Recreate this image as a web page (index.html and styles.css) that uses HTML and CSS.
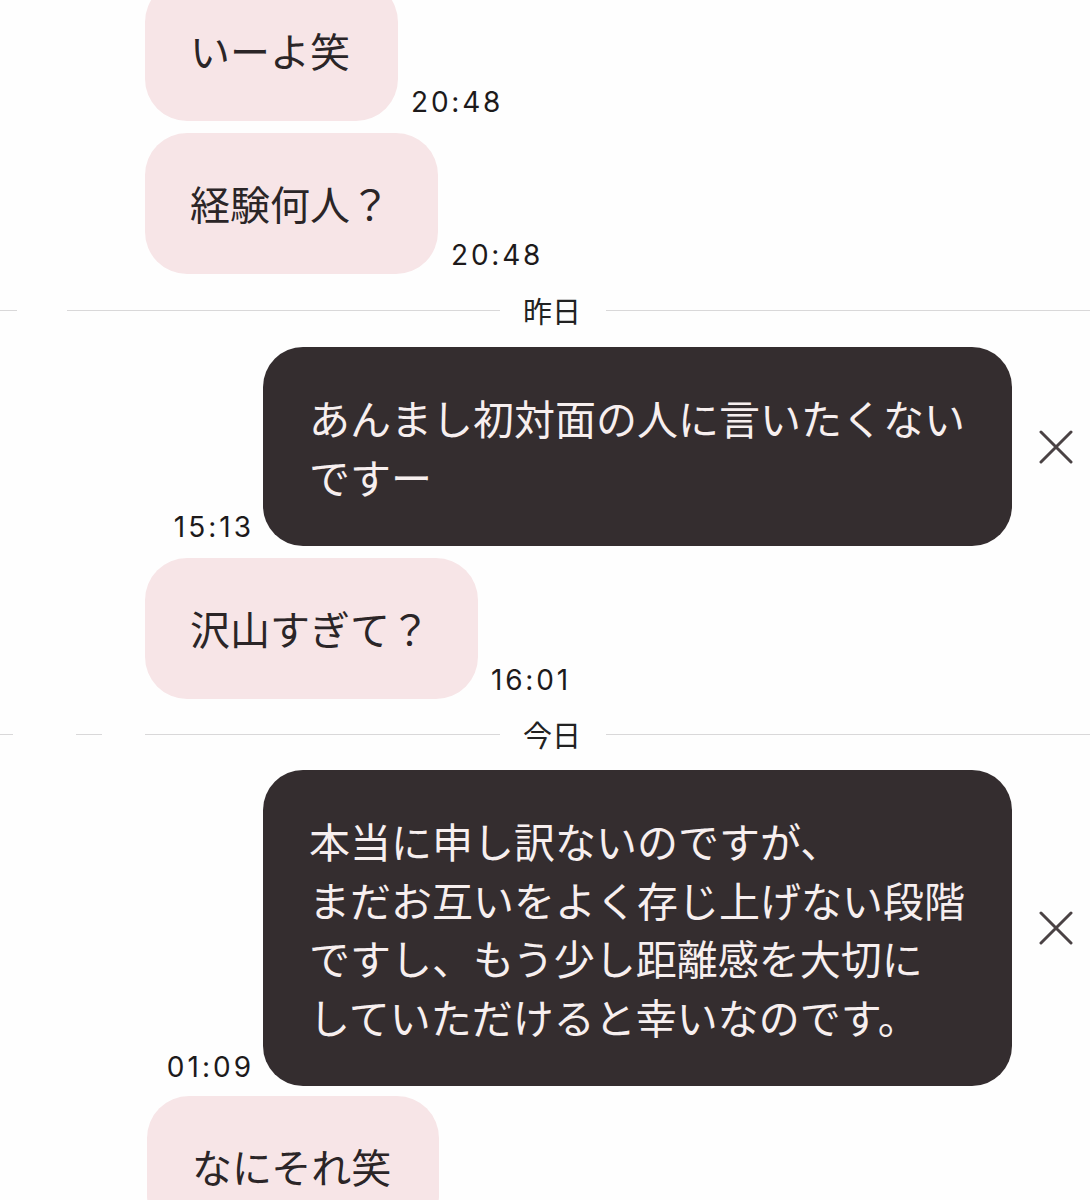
FILE: index.html
```html
<!DOCTYPE html>
<html lang="ja">
<head>
<meta charset="utf-8">
<title>chat</title>
<link rel="stylesheet" href="styles.css">
</head>
<body>
<main class="chat">
  <div class="row in">
    <div class="bubble pink">いーよ笑</div>
    <span class="time">20:48</span>
  </div>
  <div class="row in">
    <div class="bubble pink">経験何人？</div>
    <span class="time">20:48</span>
  </div>

  <div class="divider">
    <span class="seg d1a"></span>
    <span class="seg d1b"></span>
    <span class="label">昨日</span>
    <span class="seg rest"></span>
  </div>

  <div class="row out">
    <span class="time dark-time">15:13</span>
    <div class="bubble dark">あんまし初対面の人に言いたくないですー</div>
    <svg class="close" width="34" height="34" viewBox="0 0 34 34" aria-hidden="true">
      <path d="M2 2 L32 32 M32 2 L2 32" stroke="#4a4244" stroke-width="3" stroke-linecap="round" fill="none"/>
    </svg>
  </div>

  <div class="row in">
    <div class="bubble pink">沢山すぎて？</div>
    <span class="time">16:01</span>
  </div>

  <div class="divider second">
    <span class="seg d2a"></span>
    <span class="seg d2b"></span>
    <span class="seg d2c"></span>
    <span class="label">今日</span>
    <span class="seg rest"></span>
  </div>

  <div class="row out">
    <span class="time dark-time">01:09</span>
    <div class="bubble dark">本当に申し訳ないのですが、<br>まだお互いをよく存じ上げない段階<br>ですし、もう少し距離感を大切に<br>していただけると幸いなのです。</div>
    <svg class="close" width="34" height="34" viewBox="0 0 34 34" aria-hidden="true">
      <path d="M2 2 L32 32 M32 2 L2 32" stroke="#4a4244" stroke-width="3" stroke-linecap="round" fill="none"/>
    </svg>
  </div>

  <div class="row in last">
    <div class="bubble pink">なにそれ笑</div>
  </div>
</main>
</body>
</html>
```

FILE: styles.css
```css
html, body {
  margin: 0;
  padding: 0;
  background: #fefefe;
  overflow: hidden;
}

body {
  width: 1090px;
  height: 1200px;
  font-family: "Noto Sans CJK JP", "Noto Sans", sans-serif;
  color: #2b2527;
}

.chat {
  display: flex;
  flex-direction: column;
  gap: 12px;
  margin-top: -20px;
}

.row {
  display: flex;
  align-items: flex-end;
}

.row.in {
  padding-left: 145px;
}

.row.in.last {
  padding-left: 147px;
  margin-top: -2px;
}

.row.out {
  justify-content: flex-end;
  padding-right: 17px;
}

.bubble {
  font-size: 40px;
  line-height: 59px;
  border-radius: 42px;
  padding: 41px 48px 41px 45px;
  white-space: nowrap;
}

.pink {
  background: #f7e5e7;
  color: #2b2527;
}

.pink + .time {
  margin-left: 13px;
}

.dark {
  background: #342d2f;
  color: #f7efef;
  width: 749px;
  box-sizing: border-box;
  padding: 41px 30px 41px 46px;
  font-size: 41px;
  line-height: 58.5px;
  white-space: normal;
  border-radius: 40px;
}

.time {
  font-family: "Inter", "Liberation Sans", sans-serif;
  font-size: 28px;
  line-height: 28px;
  letter-spacing: 2.8px;
  color: #1d1a1b;
  margin-bottom: 5px;
}

.dark-time {
  letter-spacing: 3px;
  margin-right: 9px;
}

.close {
  align-self: center;
  margin-left: 27px;
  flex: none;
}

.divider {
  display: flex;
  align-items: center;
  height: 37px;
  margin: 6px 0;
}

.divider.second {
  margin: 5px 0 5px;
}

.seg {
  height: 1.5px;
  background: #d9d8d9;
  flex: none;
}

.d1a { width: 17px; }
.d1b { width: 433px; margin-left: 50px; }

.d2a { width: 13px; }
.d2b { width: 26px; margin-left: 63px; }
.d2c { width: 355px; margin-left: 43px; }

.label {
  font-size: 29px;
  line-height: 37px;
  color: #222;
  margin: 0 25px 0 23px;
  flex: none;
}

.rest {
  flex: 1;
}
```
